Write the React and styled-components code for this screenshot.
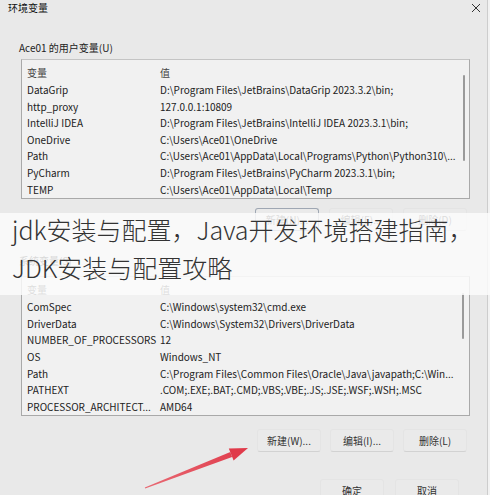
import React from "react";
import styled, { createGlobalStyle } from "styled-components";

const Global = createGlobalStyle`
  html, body { margin: 0; padding: 0; background: #f2f2f2; overflow: hidden; }
  * { box-sizing: border-box; }
`;

const Page = styled.div`
  position: relative;
  width: 490px;
  height: 495px;
  overflow: hidden;
  background: #f2f2f2;
`;

const Dialog = styled.div`
  width: 488px;
  height: 495px;
  background: #e9e9e9;
  border-right: 1px solid #cdcdcd;
  display: flex;
  flex-direction: column;
  font-family: "Noto Sans CJK SC", "Noto Sans", sans-serif;
  color: #222;
`;

const TitleBar = styled.div`
  height: 15px;
  display: flex;
  align-items: center;
  justify-content: space-between;
  padding: 0 6px 0 8px;
  font-size: 10px;
  color: #111;
`;

const CloseIcon = styled.svg`
  display: block;
`;

const SectionLabel = styled.div`
  margin: ${(p) => p.$top}px 0 0 19px;
  height: 16px;
  line-height: 16px;
  font-size: 10px;
  color: #222;
`;

const ListBox = styled.div`
  margin: ${(p) => p.$top}px 0 0 21px;
  width: 449px;
  height: 141px;
  border: 1px solid #a9a9a9;
  border-top-color: #c4c4c4;
  background: #f1f1f1;
  display: flex;
`;

const Rows = styled.div`
  flex: 1;
  padding-top: 4px;
`;

const Row = styled.div`
  display: grid;
  grid-template-columns: 133px 1fr;
  height: ${(p) => (p.$head ? 18 : 16.6)}px;
  line-height: ${(p) => (p.$head ? 18 : 16.6)}px;
  padding-left: 5px;
  font-size: 10px;
  color: ${(p) => (p.$head ? "#444" : "#222")};
  white-space: nowrap;
  overflow: hidden;
`;

const Track = styled.div`
  width: 14px;
  padding: ${(p) => p.$top}px 0 0 7px;
`;

const Thumb = styled.div`
  width: 2px;
  height: ${(p) => p.$h}px;
  background: #9a9a9a;
  border-radius: 1px;
`;

const ButtonRow = styled.div`
  margin-top: ${(p) => p.$top}px;
  display: flex;
  justify-content: flex-end;
  gap: ${(p) => p.$gap}px;
  padding-right: ${(p) => p.$right}px;
`;

const Button = styled.div`
  width: 64px;
  height: 23px;
  display: flex;
  align-items: center;
  justify-content: center;
  font-size: 10px;
  color: #333;
  background: #eaeaea;
  border: 1px solid ${(p) => (p.$default ? "#9fa7b3" : "#e4e4e4")};
  border-bottom-color: ${(p) => (p.$default ? "#8f98a6" : "#d2d2d2")};
  border-radius: 3px;
`;

const Overlay = styled.div`
  position: absolute;
  left: 0;
  top: 213px;
  width: 490px;
  height: 82px;
  padding: 0 0 0 12px;
  background: rgba(252, 252, 252, 0.84);
  font-family: "Noto Sans CJK SC Light", "Noto Sans CJK SC DemiLight", "Noto Sans CJK SC", "Noto Sans", sans-serif;
  font-weight: 300;
  font-size: 25px;
  line-height: 38px;
  color: #333;
  white-space: nowrap;
`;

const OverlayText = styled.div`
  margin-top: -3px;
`;

const Arrow = styled.svg`
  position: absolute;
  left: 0;
  top: 0;
  pointer-events: none;
`;

const userVars = [
  ["DataGrip", "D:\\Program Files\\JetBrains\\DataGrip 2023.3.2\\bin;"],
  ["http_proxy", "127.0.0.1:10809"],
  ["IntelliJ IDEA", "D:\\Program Files\\JetBrains\\IntelliJ IDEA 2023.3.1\\bin;"],
  ["OneDrive", "C:\\Users\\Ace01\\OneDrive"],
  ["Path", "C:\\Users\\Ace01\\AppData\\Local\\Programs\\Python\\Python310\\..."],
  ["PyCharm", "D:\\Program Files\\JetBrains\\PyCharm 2023.3.1\\bin;"],
  ["TEMP", "C:\\Users\\Ace01\\AppData\\Local\\Temp"],
];

const sysVars = [
  ["ComSpec", "C:\\Windows\\system32\\cmd.exe"],
  ["DriverData", "C:\\Windows\\System32\\Drivers\\DriverData"],
  ["NUMBER_OF_PROCESSORS", "12"],
  ["OS", "Windows_NT"],
  ["Path", "C:\\Program Files\\Common Files\\Oracle\\Java\\javapath;C:\\Win..."],
  ["PATHEXT", ".COM;.EXE;.BAT;.CMD;.VBS;.VBE;.JS;.JSE;.WSF;.WSH;.MSC"],
  ["PROCESSOR_ARCHITECT...", "AMD64"],
];

function VarList({ top, data, thumbTop, thumbH }) {
  return (
    <ListBox $top={top}>
      <Rows>
        <Row $head>
          <span>变量</span>
          <span>值</span>
        </Row>
        {data.map(([k, v]) => (
          <Row key={k + v}>
            <span>{k}</span>
            <span>{v}</span>
          </Row>
        ))}
      </Rows>
      <Track $top={thumbTop}>
        <Thumb $h={thumbH} />
      </Track>
    </ListBox>
  );
}

export default function App() {
  return (
    <Page>
      <Global />
      <Dialog>
        <TitleBar>
          <span>环境变量</span>
          <CloseIcon width="10" height="10" viewBox="0 0 10 10">
            <path d="M1 1 L9 9 M9 1 L1 9" stroke="#333" strokeWidth="1" fill="none" />
          </CloseIcon>
        </TitleBar>
        <SectionLabel $top={25}>Ace01 的用户变量(U)</SectionLabel>
        <VarList top={3} data={userVars} thumbTop={15} thumbH={86} />
        <ButtonRow $top={9} $gap={10} $right={20}>
          <Button $default>新建(N)...</Button>
          <Button>编辑(E)...</Button>
          <Button>删除(D)</Button>
        </ButtonRow>
        <SectionLabel $top={22}>系统变量(S)</SectionLabel>
        <VarList top={7} data={sysVars} thumbTop={16} thumbH={46} />
        <ButtonRow $top={13} $gap={9} $right={20}>
          <Button>新建(W)...</Button>
          <Button>编辑(I)...</Button>
          <Button>删除(L)</Button>
        </ButtonRow>
        <ButtonRow $top={27} $gap={11} $right={28}>
          <Button>确定</Button>
          <Button>取消</Button>
        </ButtonRow>
      </Dialog>
      <Overlay>
        <OverlayText>
          <div>jdk安装与配置，Java开发环境搭建指南，</div>
          <div>JDK安装与配置攻略</div>
        </OverlayText>
      </Overlay>
      <Arrow width="490" height="495" viewBox="0 0 490 495">
        <defs>
          <linearGradient id="ag" x1="145" y1="488" x2="248" y2="448" gradientUnits="userSpaceOnUse">
            <stop offset="0" stopColor="#e86a74" />
            <stop offset="1" stopColor="#e03a4a" />
          </linearGradient>
        </defs>
        <polygon points="145.2,488.6 144.8,487.4 230.3,452.0 232.1,457.0" fill="url(#ag)" />
        <polygon points="248,448 228.8,448.6 233.6,460.6" fill="#e03a4a" />
      </Arrow>
    </Page>
  );
}
